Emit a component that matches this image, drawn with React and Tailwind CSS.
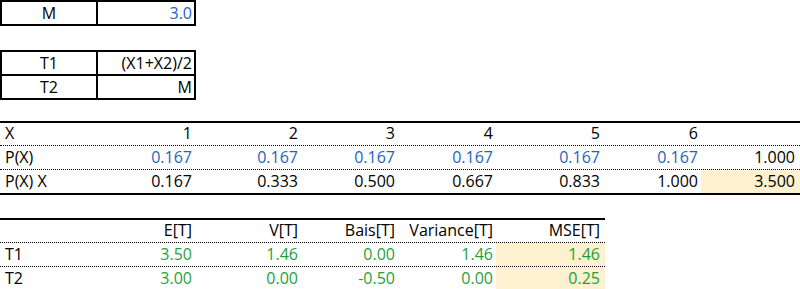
import React from "react";

const font = { fontFamily: '"Open Sans", "Noto Sans", sans-serif' };

const blue = "text-[#1a64c4]";
const green = "text-[#1f9f3a]";
const hl = "bg-[#fdf1cf]";

// column widths of the wide sheet
const cols = ["w-[98px]", "w-[97px]", "w-[106px]", "w-[97px]", "w-[98px]", "w-[107px]", "w-[98px]", "w-[99px]"];

function Cell({ i, children, className = "", left }) {
  return (
    <div
      className={`${cols[i]} shrink-0 h-full flex items-end pb-[1px] ${
        left ? "justify-start pl-[5px]" : "justify-end pr-[3px]"
      } ${className}`}
    >
      {children}
    </div>
  );
}

function SmallBox({ rows }) {
  return (
    <div className="w-[196px] border-2 border-black">
      {rows.map((r, idx) => (
        <div
          key={idx}
          className={`flex h-[22px] ${idx > 0 ? "border-t-2 border-black h-[24px]" : ""}`}
        >
          <div className="w-[96px] border-r-2 border-black flex items-end justify-center pb-[0px]">
            {r[0]}
          </div>
          <div className={`flex-1 flex items-end justify-end pr-[2px] ${r[2] || ""}`}>{r[1]}</div>
        </div>
      ))}
    </div>
  );
}

export default function App() {
  const xs = ["1", "2", "3", "4", "5", "6"];
  const px = ["0.167", "0.333", "0.500", "0.667", "0.833", "1.000"];

  return (
    <div className="w-[800px] h-[289px] bg-white text-black text-[16px] leading-[22px] overflow-hidden" style={font}>
      <SmallBox rows={[["M", "3.0", blue]]} />

      <div className="mt-[24px]">
        <SmallBox rows={[["T1", "(X1+X2)/2"], ["T2", "M"]]} />
      </div>

      {/* X / P(X) table */}
      <div className="mt-[21px] w-[800px] border-t-2 border-b-2 border-black">
        <div className="flex h-[23px] border-b border-dotted border-black">
          <Cell i={0} left>X</Cell>
          {xs.map((x, k) => (
            <Cell key={k} i={k + 1}>{x}</Cell>
          ))}
          <Cell i={7}></Cell>
        </div>
        <div className="flex h-[24px] border-b border-dotted border-black">
          <Cell i={0} left>P(X)</Cell>
          {xs.map((x, k) => (
            <Cell key={k} i={k + 1} className={blue}>0.167</Cell>
          ))}
          <Cell i={7} className="pr-[5px]">1.000</Cell>
        </div>
        <div className="flex h-[23px]">
          <Cell i={0} left>P(X) X</Cell>
          {px.map((v, k) => (
            <Cell key={k} i={k + 1}>{v}</Cell>
          ))}
          <Cell i={7} className={`${hl} pr-[5px]`}>3.500</Cell>
        </div>
      </div>

      {/* estimator table */}
      <div className="mt-[23px] w-[605px] border-t-2 border-b-2 border-black">
        <div className="flex h-[23px] border-b border-dotted border-black">
          <Cell i={0} left></Cell>
          <Cell i={1}>E[T]</Cell>
          <Cell i={2}>V[T]</Cell>
          <Cell i={3}>Bais[T]</Cell>
          <Cell i={4}>Variance[T]</Cell>
          <Cell i={5} className="!w-[109px] pr-[5px]">MSE[T]</Cell>
        </div>
        <div className={`flex h-[24px] border-b border-dotted border-black ${green}`}>
          <Cell i={0} left className="text-black">T1</Cell>
          <Cell i={1}>3.50</Cell>
          <Cell i={2}>1.46</Cell>
          <Cell i={3}>0.00</Cell>
          <Cell i={4}>1.46</Cell>
          <Cell i={5} className={`!w-[109px] pr-[5px] ${hl}`}>1.46</Cell>
        </div>
        <div className={`flex h-[23px] ${green}`}>
          <Cell i={0} left className="text-black">T2</Cell>
          <Cell i={1}>3.00</Cell>
          <Cell i={2}>0.00</Cell>
          <Cell i={3}>-0.50</Cell>
          <Cell i={4}>0.00</Cell>
          <Cell i={5} className={`!w-[109px] pr-[5px] ${hl}`}>0.25</Cell>
        </div>
      </div>
    </div>
  );
}
